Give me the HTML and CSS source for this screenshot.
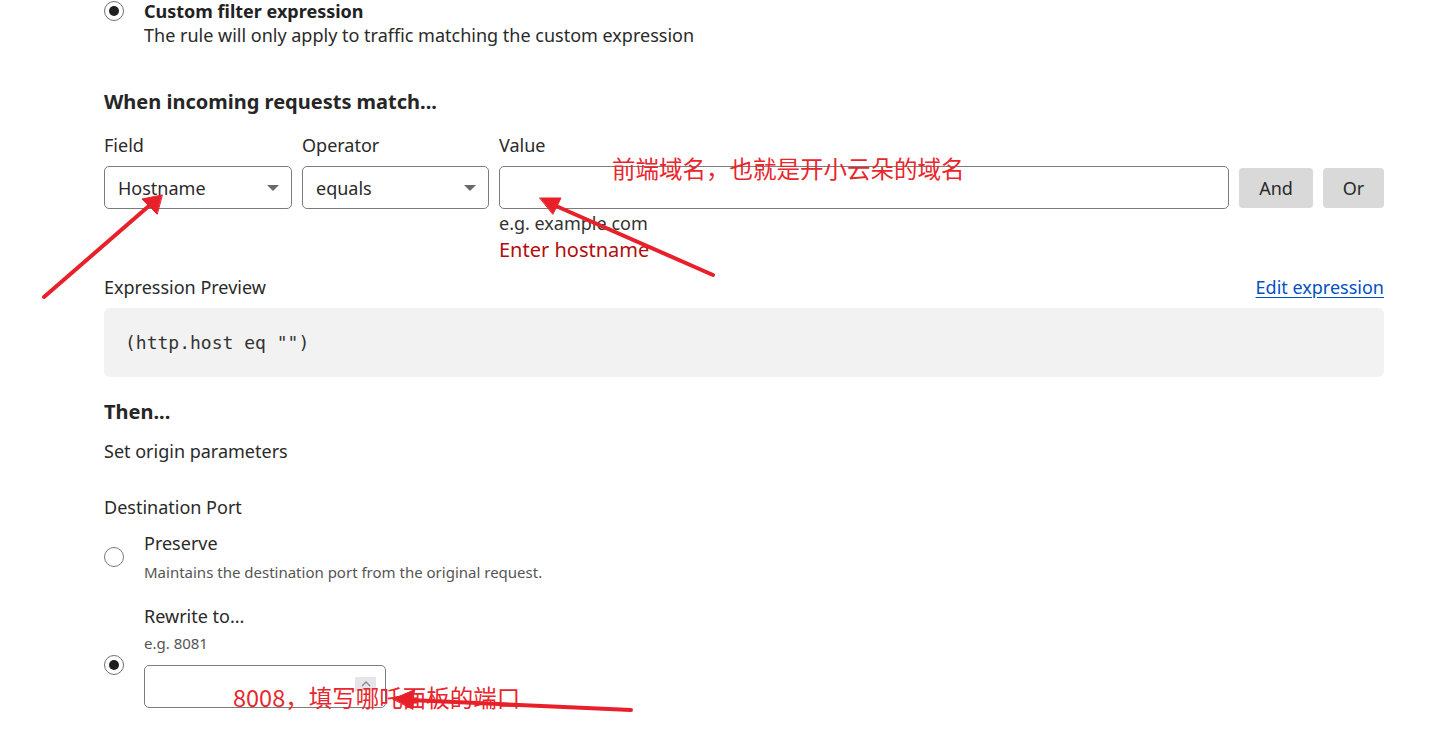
FILE: index.html
```html
<!DOCTYPE html>
<html lang="en">
<head>
<meta charset="utf-8">
<title>Origin rule</title>
<link rel="stylesheet" href="styles.css">
</head>
<body>
<div class="page">
  <div class="option option-top">
    <span class="radio checked"></span>
    <div class="option-body">
      <div class="option-title">Custom filter expression</div>
      <div class="option-desc">The rule will only apply to traffic matching the custom expression</div>
    </div>
  </div>

  <h2 class="heading heading-when">When incoming requests match...</h2>

  <div class="match-row">
    <div class="col col-field">
      <label class="field-label">Field</label>
      <div class="select"><span>Hostname</span><span class="caret"></span></div>
    </div>
    <div class="col col-op">
      <label class="field-label">Operator</label>
      <div class="select"><span>equals</span><span class="caret"></span></div>
    </div>
    <div class="col col-value">
      <label class="field-label">Value</label>
      <div class="text-input"></div>
      <div class="hint">e.g. example.com</div>
      <div class="error">Enter hostname</div>
    </div>
    <div class="col col-btns">
      <button class="btn btn-and">And</button>
      <button class="btn btn-or">Or</button>
    </div>
  </div>

  <div class="preview-head">
    <span class="preview-label">Expression Preview</span>
    <a class="edit-link" href="#">Edit expression</a>
  </div>
  <div class="code-box"><code>(http.host eq "")</code></div>

  <h2 class="heading heading-then">Then...</h2>
  <div class="plain set-origin">Set origin parameters</div>
  <div class="plain dest-port">Destination Port</div>

  <div class="option option-preserve">
    <span class="radio"></span>
    <div class="option-body">
      <div class="opt-label">Preserve</div>
      <div class="opt-small">Maintains the destination port from the original request.</div>
    </div>
  </div>

  <div class="option option-rewrite">
    <span class="radio checked radio-rewrite"></span>
    <div class="option-body">
      <div class="opt-label">Rewrite to...</div>
      <div class="opt-small opt-eg">e.g. 8081</div>
      <div class="port-input"><span class="spin"><svg width="10" height="6" viewBox="0 0 10 6"><path d="M1 5 L5 1 L9 5" fill="none" stroke="#8a8a8a" stroke-width="1.4"/></svg></span></div>
    </div>
  </div>

  <div class="note note-1">前端域名，也就是开小云朵的域名</div>
  <div class="note note-2">8008，填写哪吒面板的端口</div>

  <svg class="arrows" width="1456" height="737" viewBox="0 0 1456 737">
    <g stroke="#e8202a" stroke-width="4" stroke-linecap="round" fill="#e8202a">
      <line x1="44" y1="297" x2="150" y2="205"/>
      <polygon points="162,195 142,199 157,214" stroke-width="1"/>
      <line x1="713" y1="275" x2="556" y2="206"/>
      <polygon points="540,198 561,198 553,214" stroke-width="1"/>
      <line x1="631" y1="710" x2="410" y2="700"/>
      <polygon points="393,699 414,690 413,709" stroke-width="1"/>
    </g>
  </svg>
</div>
</body>
</html>
```

FILE: styles.css
```css
html, body {
  margin: 0;
  padding: 0;
  background: #ffffff;
}

body {
  font-family: "Noto Sans", "Open Sans", "Liberation Sans", sans-serif;
  color: #313131;
  font-size: 18px;
}

.page {
  position: relative;
  width: 1456px;
  height: 737px;
  overflow: hidden;
  box-sizing: border-box;
  padding: 0 72px 0 104px;
}

/* radio options */
.option {
  display: flex;
  align-items: center;
  gap: 20px;
}

.option-top {
  align-items: flex-start;
  margin-top: 0;
}

.option-top .radio {
  margin-top: 1px;
}

.radio {
  width: 20px;
  height: 20px;
  box-sizing: border-box;
  border: 1.5px solid #7a7a7a;
  border-radius: 50%;
  flex: 0 0 auto;
  display: flex;
  align-items: center;
  justify-content: center;
}

.radio.checked {
  border-color: #6f6f6f;
}

.radio.checked::after {
  content: "";
  width: 10px;
  height: 10px;
  border-radius: 50%;
  background: #1e1e1e;
}

.option-title {
  font-weight: 700;
  font-size: 18px;
  line-height: 22px;
  color: #222;
}

.option-desc {
  line-height: 26px;
  font-size: 18px;
  color: #2a2a2a;
}

.heading {
  margin: 0;
  font-size: 20px;
  font-weight: 700;
  line-height: 28px;
  color: #262626;
}

.heading-when {
  margin-top: 40px;
}

/* match row */
.match-row {
  display: flex;
  align-items: flex-start;
  margin-top: 17px;
}

.col {
  display: flex;
  flex-direction: column;
}

.col-field { width: 188px; margin-right: 10px; }
.col-op { width: 187px; margin-right: 10px; }
.col-value { width: 730px; margin-right: 10px; }

.field-label {
  line-height: 24px;
  font-size: 18px;
  color: #2a2a2a;
  margin-bottom: 9px;
}

.select,
.text-input,
.port-input {
  height: 43px;
  box-sizing: border-box;
  border: 1px solid #7c7c7c;
  border-radius: 5px;
  background: #fff;
}

.select {
  display: flex;
  align-items: center;
  justify-content: space-between;
  padding: 0 12px 0 13px;
  font-size: 18px;
  color: #2a2a2a;
}

.caret {
  width: 0;
  height: 0;
  border-left: 6px solid transparent;
  border-right: 6px solid transparent;
  border-top: 6px solid #6a6a6a;
}

.hint {
  margin-top: 3px;
  line-height: 22px;
  font-size: 18px;
  color: #333;
}

.error {
  margin-top: 3px;
  line-height: 26px;
  font-size: 20px;
  color: #b20d0d;
}

.col-btns {
  flex-direction: row;
  gap: 10px;
  padding-top: 35px;
}

.btn {
  font-family: inherit;
  font-size: 18px;
  color: #2a2a2a;
  background: #d9d9d9;
  border: none;
  border-radius: 4px;
  height: 40px;
  padding: 0;
}

.btn-and { width: 74px; }
.btn-or { width: 61px; }

/* preview */
.preview-head {
  display: flex;
  justify-content: space-between;
  align-items: center;
  margin-top: 12px;
  line-height: 24px;
}

.preview-label {
  font-size: 18px;
  color: #2a2a2a;
}

.edit-link {
  font-size: 18px;
  color: #0051c3;
  text-decoration: underline;
  text-underline-offset: 3px;
}

.code-box {
  margin-top: 9px;
  height: 69px;
  box-sizing: border-box;
  background: #f2f2f2;
  border-radius: 6px;
  display: flex;
  align-items: center;
  padding-left: 21px;
}

.code-box code {
  font-family: "DejaVu Sans Mono", "Liberation Mono", monospace;
  font-size: 18px;
  color: #333;
}

.heading-then {
  margin-top: 21px;
}

.plain {
  line-height: 24px;
  font-size: 18px;
  color: #2a2a2a;
}

.set-origin { margin-top: 13px; }
.dest-port { margin-top: 32px; }

.option-preserve { margin-top: 12px; }

.opt-label {
  line-height: 24px;
  font-size: 18px;
  color: #2a2a2a;
}

.opt-small {
  margin-top: 7px;
  line-height: 20px;
  font-size: 15px;
  color: #555;
}

.option-rewrite { margin-top: 22px; }

.option-rewrite .opt-eg { margin-top: 5px; }

.radio-rewrite { margin-top: 18px; }

.port-input {
  position: relative;
  width: 242px;
  margin-top: 12px;
}

.spin {
  position: absolute;
  right: 9px;
  top: 11px;
  width: 21px;
  height: 14px;
  background: #e6e6ea;
  display: flex;
  align-items: center;
  justify-content: center;
}

/* annotations */
.note {
  position: absolute;
  font-family: "Noto Sans CJK SC", sans-serif;
  font-size: 23.5px;
  line-height: 30px;
  color: #e8262d;
  white-space: nowrap;
}

.note-1 { left: 612px; top: 153px; }
.note-2 { left: 233px; top: 682px; }

.arrows {
  position: absolute;
  left: 0;
  top: 0;
  pointer-events: none;
}
```
